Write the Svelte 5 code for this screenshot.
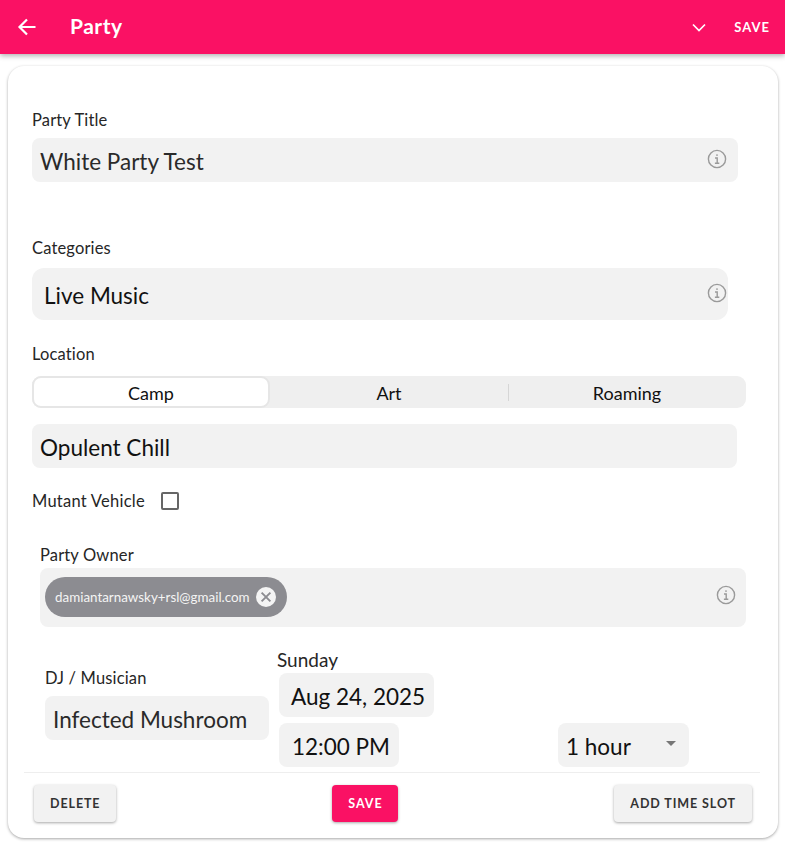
<script>
  let segments = ['Camp', 'Art', 'Roaming'];
  let active = 'Camp';
</script>

{#snippet info()}
  <svg class="info" width="20" height="20" viewBox="0 0 20 20" fill="none" stroke="#9a9a9a" stroke-width="1.4">
    <circle cx="10" cy="10" r="8.6" />
    <circle cx="10" cy="6.1" r="0.9" fill="#9a9a9a" stroke="none" />
    <path d="M8 9h2.2v5M7.9 14.2h4.4" />
  </svg>
{/snippet}

<div class="page">
  <header class="topbar">
    <svg class="back" width="20" height="20" viewBox="0 0 20 20" fill="none" stroke="#fff" stroke-width="2.2">
      <path d="M18.5 10H2.5M10 2.5 2.5 10l7.5 7.5" />
    </svg>
    <h1>Party</h1>
    <svg class="chev" width="14" height="9" viewBox="0 0 14 9" fill="none" stroke="#fff" stroke-width="1.7">
      <path d="M1 1.5 7 7.5l6-6" />
    </svg>
    <span class="top-save">SAVE</span>
  </header>

  <main class="card">
    <div class="scroll">
      <div class="label first">Party Title</div>
      <div class="field title">
        <span>White Party Test</span>
        {@render info()}
      </div>

      <div class="label cat-label">Categories</div>
      <div class="field cats">
        <span>Live Music</span>
        {@render info()}
      </div>

      <div class="label loc-label">Location</div>
      <div class="segments">
        {#each segments as s, i}
          <div class="seg" class:on={s === active} class:divided={i === 2}>{s}</div>
        {/each}
      </div>

      <div class="field venue"><span>Opulent Chill</span></div>

      <div class="mutant">
        <span>Mutant Vehicle</span>
        <span class="check"></span>
      </div>

      <div class="owner">
        <div class="label">Party Owner</div>
        <div class="owner-box">
          <div class="chip">
            <span>damiantarnawsky+rsl@gmail.com</span>
            <svg width="20" height="20" viewBox="0 0 20 20">
              <circle cx="10" cy="10" r="10" fill="#f4f4f4" />
              <path d="M5.6 5.6l8.8 8.8M14.4 5.6l-8.8 8.8" stroke="#8c8c91" stroke-width="1.9" />
            </svg>
          </div>
          {@render info()}
        </div>
      </div>

      <div class="slot">
        <div class="dj">
          <div class="label">DJ / Musician</div>
          <div class="field small dj-name"><span>Infected Mushroom</span></div>
        </div>
        <div class="when">
          <div class="day">Sunday</div>
          <div class="field small date"><span>Aug 24, 2025</span></div>
          <div class="time-row">
            <div class="field small time"><span>12:00 PM</span></div>
            <div class="field small duration">
              <span>1 hour</span>
              <i class="caret"></i>
            </div>
          </div>
        </div>
      </div>
    </div>

    <footer class="actions">
      <button class="btn">DELETE</button>
      <button class="btn primary">SAVE</button>
      <button class="btn">ADD TIME SLOT</button>
    </footer>
  </main>
</div>

<style>
  :global(body) {
    background: #fff;
    font-family: Lato, "Noto Sans", sans-serif;
    color: #1c1c1c;
  }
  .page {
    width: 785px;
    height: 850px;
    overflow: hidden;
  }
  .topbar {
    height: 54px;
    background: #fa1164;
    box-shadow: 0 2px 5px rgba(0, 0, 0, 0.3);
    display: flex;
    align-items: center;
    color: #fff;
    padding: 0 15px 0 17px;
    position: relative;
  }
  .back { margin-right: 33px; }
  h1 {
    margin: 0;
    font-size: 21px;
    font-weight: 700;
    letter-spacing: 0.5px;
    flex: 1;
    margin-top: -3px;
  }
  .chev { margin-right: 28px; }
  .top-save {
    font-size: 13px;
    font-weight: 700;
    letter-spacing: 1px;
  }
  .card {
    margin: 12px 7px 0 8px;
    height: 772px;
    background: #fff;
    border-radius: 16px;
    box-shadow: 0 1px 3px rgba(0, 0, 0, 0.35);
    display: flex;
    flex-direction: column;
    padding: 0 18px 0 16px;
    box-sizing: border-box;
  }
  .scroll {
    height: 706px;
    overflow: hidden;
    padding: 0 8px;
    border-bottom: 1px solid #eee;
  }
  .label { font-size: 16.5px; line-height: 20px; color: #262626; letter-spacing: 0.15px; }
  .first { margin-top: 44px; }
  .field {
    background: #f2f2f2;
    border-radius: 8px;
    display: flex;
    align-items: center;
    justify-content: space-between;
    font-size: 22.5px;
    white-space: nowrap;
    box-sizing: border-box;
  }
  .field span { padding-top: 2px; }
  .title {
    width: 706px;
    height: 44px;
    margin-top: 8px;
    padding: 0 11px 0 8px;
    color: #2a2a2a;
  }
  .info { flex: none; margin-top: -2px; }
  .cat-label { margin-top: 56px; }
  .cats {
    width: 696px;
    height: 52px;
    margin-top: 10px;
    border-radius: 12px;
    padding: 0 1px 0 12px;
    color: #111;
  }
  .loc-label { margin-top: 24px; }
  .segments {
    width: 714px;
    height: 32px;
    margin-top: 12px;
    background: #efefef;
    border-radius: 9px;
    display: grid;
    grid-template-columns: repeat(3, 1fr);
    align-items: center;
    text-align: center;
    font-size: 18px;
    color: #111;
  }
  .seg {
    height: 32px;
    line-height: 34px;
    box-sizing: border-box;
  }
  .seg.on {
    background: #fff;
    border: 2px solid #e6e6e6;
    border-radius: 9px;
    line-height: 30px;
  }
  .seg.divided { position: relative; }
  .seg.divided::before {
    content: "";
    position: absolute;
    left: 0;
    top: 8px;
    height: 17px;
    width: 1px;
    background: #d6d6d6;
  }
  .venue {
    width: 705px;
    height: 44px;
    margin-top: 16px;
    padding: 0 8px;
    color: #111;
  }
  .mutant {
    display: flex;
    align-items: center;
    gap: 16px;
    height: 24px;
    margin-top: 21px;
    font-size: 16.5px;
    letter-spacing: 0.25px;
    color: #262626;
  }
  .check {
    width: 14px;
    height: 14px;
    border: 2px solid #666;
    border-radius: 2px;
    margin-bottom: 1px;
  }
  .owner { margin: 32px 0 0 8px; }
  .owner .label { line-height: 20px; }
  .owner-box {
    width: 706px;
    height: 59px;
    margin-top: 3px;
    background: #f2f2f2;
    border-radius: 8px;
    display: flex;
    align-items: center;
    justify-content: space-between;
    padding: 0 10px 0 5px;
    box-sizing: border-box;
  }
  .owner-box .info { margin-top: -5px; }
  .chip {
    height: 40px;
    width: 242px;
    border-radius: 20px;
    background: #8c8c91;
    color: #f4f4f4;
    font-size: 13.4px;
    display: flex;
    align-items: center;
    justify-content: space-between;
    padding: 0 11px 0 10px;
    box-sizing: border-box;
    margin-top: -1px;
  }
  .slot {
    display: flex;
    margin: 23px 0 0 13px;
    gap: 8px;
  }
  .dj { padding-top: 18px; width: 224px; }
  .dj-name {
    width: 224px;
    margin-top: 8px;
    padding: 0 8px;
    color: #2a2a2a;
  }
  .field.small { height: 44px; }
  .day { font-size: 19px; line-height: 22px; color: #262626; margin-top: -1px; }
  .date {
    width: 155px;
    margin: 2px 0 0 2px;
    padding: 0 12px;
    color: #111;
  }
  .time-row {
    display: flex;
    margin: 6px 0 0 2px;
  }
  .time {
    width: 120px;
    padding: 0 13px;
    color: #111;
  }
  .duration {
    width: 131px;
    margin-left: 159px;
    padding: 0 13px 0 8px;
    color: #111;
  }
  .caret {
    width: 0;
    height: 0;
    border-left: 5px solid transparent;
    border-right: 5px solid transparent;
    border-top: 5px solid #777;
    margin-bottom: 4px;
  }
  .actions {
    flex: 1;
    display: flex;
    align-items: flex-start;
    justify-content: space-between;
    padding: 12px 8px 0 10px;
  }
  .btn {
    height: 37px;
    padding: 0 16px;
    border: 0;
    border-radius: 4px;
    background: #f2f2f2;
    color: #333;
    font-family: Lato, "Noto Sans", sans-serif;
    font-size: 12.5px;
    font-weight: 700;
    letter-spacing: 0.9px;
    box-shadow: 0 1px 3px rgba(0, 0, 0, 0.35);
  }
  .btn.primary {
    background: #fa1164;
    color: #fff;
  }
</style>
